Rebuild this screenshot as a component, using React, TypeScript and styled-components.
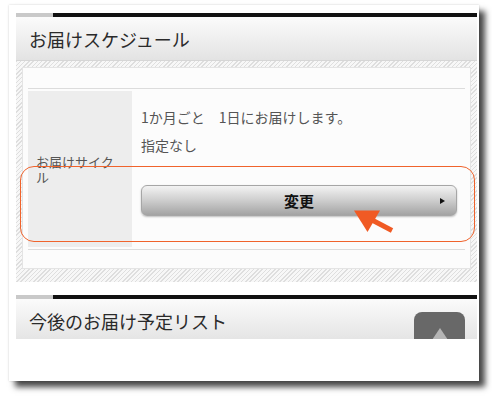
import React from 'react';
import styled, { createGlobalStyle } from 'styled-components';

const GlobalStyle = createGlobalStyle`
  html, body { margin: 0; padding: 0; background: #fff; }
  body { font-family: "Noto Sans CJK JP", "Noto Sans", sans-serif; }
  * { box-sizing: border-box; }
`;

const Page = styled.div`
  position: relative;
  width: 492px;
  height: 409px;
  overflow: hidden;
  background: #fff;
  padding: 5px 0 0 9px;
`;

const Frame = styled.div`
  width: 470px;
  padding: 8px 2px 42px 7px;
  background: #fff;
  box-shadow: 6px 6px 6px rgba(0, 0, 0, 0.72), 0 0 2px rgba(0, 0, 0, 0.18);
`;

const Screen = styled.div`
  position: relative;
  height: 326px;
  overflow: hidden;
  background: #fff;
`;

const Section = styled.section<{ $gap?: number }>`
  margin-top: ${(p) => p.$gap ?? 0}px;
`;

const TopBar = styled.div`
  display: flex;
  height: 4px;
  &::before {
    content: '';
    width: 37px;
    background: #c9c9c9;
  }
  &::after {
    content: '';
    flex: 1;
    background: #111;
  }
`;

const Header = styled.h2`
  margin: 0;
  height: 44px;
  display: flex;
  align-items: center;
  padding: 0 13px;
  font-size: 18px;
  font-weight: normal;
  color: #2a2a2a;
  background: linear-gradient(#fbfbfb, #e3e3e3);
  border-bottom: 1px solid #d6d6d6;
`;

const Hatch = styled.div`
  padding: 6px 6px 13px;
  background: repeating-linear-gradient(135deg, #dedede 0 1px, #f7f7f7 1px 3px);
`;

const Card = styled.div`
  background: #fcfcfc;
  border: 1px solid #e4e4e4;
  padding: 20px 5px 18px;
`;

const Table = styled.div`
  border-top: 1px solid #dcdcdc;
  border-bottom: 1px solid #dcdcdc;
  padding: 2px 0;
`;

const Row = styled.div`
  display: grid;
  grid-template-columns: 104px 1fr;
  column-gap: 1px;
`;

const Label = styled.div`
  display: flex;
  align-items: center;
  padding: 0 8px;
  background: #ededed;
  font-size: 13px;
  line-height: 15px;
  color: #555;
`;

const Value = styled.div`
  padding: 16px 8px 31px;
`;

const Text = styled.p<{ $gap?: number }>`
  margin: ${(p) => p.$gap ?? 0}px 0 0;
  font-size: 14px;
  line-height: 20px;
  color: #555;
`;

const ChangeButton = styled.button`
  position: relative;
  display: flex;
  align-items: center;
  justify-content: center;
  width: 100%;
  height: 31px;
  margin-top: 30px;
  padding: 0;
  border: 1px solid #a6a6a6;
  border-radius: 6px;
  background: linear-gradient(#f3f3f3, #cdcdcd 50%, #a3a3a3);
  box-shadow: 0 1px 2px rgba(0, 0, 0, 0.25);
  font-family: "Noto Sans CJK JP", sans-serif;
  font-weight: bold;
  font-size: 15px;
  color: #111;
  &::after {
    content: '';
    position: absolute;
    right: 11px;
    top: 50%;
    margin-top: -3px;
    border-left: 5px solid #111;
    border-top: 3px solid transparent;
    border-bottom: 3px solid transparent;
  }
`;

const PageTop = styled.div`
  position: absolute;
  left: 398px;
  top: 299px;
  width: 51px;
  height: 51px;
  border-radius: 8px;
  background: #686868;
  display: flex;
  justify-content: center;
  padding-top: 16px;
  &::before {
    content: '';
    width: 0;
    height: 0;
    border-left: 12px solid transparent;
    border-right: 12px solid transparent;
    border-bottom: 18px solid #b4b4b4;
  }
`;

const Highlight = styled.div`
  position: absolute;
  left: 20px;
  top: 166px;
  width: 455px;
  height: 76px;
  border: 1.5px solid #f0632c;
  border-radius: 14px;
  pointer-events: none;
`;

const Pointer = styled.svg`
  position: absolute;
  left: 350px;
  top: 205px;
  width: 46px;
  height: 32px;
  pointer-events: none;
`;

export default function App() {
  return (
    <>
      <GlobalStyle />
      <Page>
        <Frame>
          <Screen>
            <Section>
              <TopBar />
              <Header>お届けスケジュール</Header>
              <Hatch>
                <Card>
                  <Table>
                    <Row>
                      <Label>お届けサイクル</Label>
                      <Value>
                        <Text>1か月ごと　1日にお届けします。</Text>
                        <Text $gap={8}>指定なし</Text>
                        <ChangeButton>変更</ChangeButton>
                      </Value>
                    </Row>
                  </Table>
                </Card>
              </Hatch>
            </Section>
            <Section $gap={13}>
              <TopBar />
              <Header>今後のお届け予定リスト</Header>
            </Section>
            <PageTop />
          </Screen>
        </Frame>
        <Highlight />
        <Pointer viewBox="0 0 46 32">
          <polygon points="4,5.5 30,5.5 17.5,27" fill="#f05a24" />
          <line x1="22" y1="15" x2="42" y2="25.5" stroke="#f05a24" strokeWidth="5" />
        </Pointer>
      </Page>
    </>
  );
}
